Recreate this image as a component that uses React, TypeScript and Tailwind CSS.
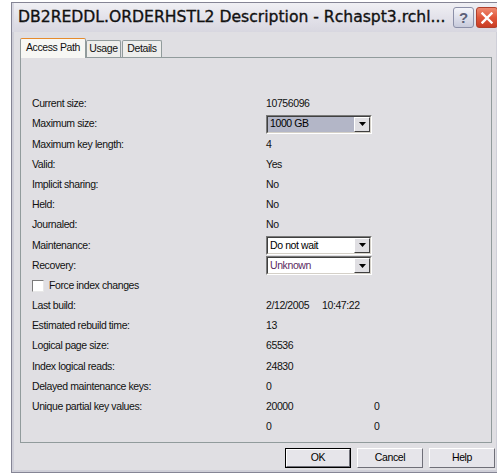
import type { ReactNode } from 'react'

const ui = '"Liberation Sans", Arial, sans-serif'

type Row = {
  label?: string
  value?: ReactNode
  second?: string
  check?: boolean
}

function Combo({ text, selected, purple }: { text: string; selected?: boolean; purple?: boolean }) {
  return (
    <div className="flex h-[19px] w-[106px] items-stretch border border-t-[#7a7a7a] border-l-[#7a7a7a] border-r-white border-b-white">
      <div className="flex flex-1 items-center border border-t-[#404040] border-l-[#404040] border-r-[#d4d0c8] border-b-[#d4d0c8] bg-white">
        <div
          className={`flex h-full flex-1 items-center pl-[2px] ${selected ? 'bg-[#b3b6c7] text-black' : ''} ${purple ? 'text-[#5b2a5e]' : 'text-black'}`}
        >
          {text}
        </div>
        <div className="flex h-[15px] w-[16px] items-center justify-center border border-t-white border-l-white border-r-[#404040] border-b-[#404040] bg-[#e0dfe3]">
          <svg width="7" height="4" viewBox="0 0 7 4">
            <path d="M0 0h7L3.5 4z" fill="#000" />
          </svg>
        </div>
      </div>
    </div>
  )
}

const rows: Row[] = [
  { label: 'Current size:', value: '10756096' },
  { label: 'Maximum size:', value: <Combo text="1000 GB" selected /> },
  { label: 'Maximum key length:', value: '4' },
  { label: 'Valid:', value: 'Yes' },
  { label: 'Implicit sharing:', value: 'No' },
  { label: 'Held:', value: 'No' },
  { label: 'Journaled:', value: 'No' },
  { label: 'Maintenance:', value: <Combo text="Do not wait" /> },
  { label: 'Recovery:', value: <Combo text="Unknown" purple /> },
  { label: 'Force index changes', check: true },
  {
    label: 'Last build:',
    value: (
      <span className="flex">
        <span className="w-[56px]">2/12/2005</span>
        <span>10:47:22</span>
      </span>
    ),
  },
  { label: 'Estimated rebuild time:', value: '13' },
  { label: 'Logical page size:', value: '65536' },
  { label: 'Index logical reads:', value: '24830' },
  { label: 'Delayed maintenance keys:', value: '0' },
  { label: 'Unique partial key values:', value: '20000', second: '0' },
  { value: '0', second: '0' },
]

function Button({ children, main }: { children: ReactNode; main?: boolean }) {
  return (
    <div className={`h-[20px] w-[66px] ${main ? 'border border-black' : ''}`}>
      <div className="flex h-full w-full items-center justify-center border border-t-white border-l-white border-r-[#6f6f78] border-b-[#6f6f78] bg-[#e6e5ea] text-black">
        {children}
      </div>
    </div>
  )
}

export default function App() {
  return (
    <div className="h-[476px] w-[497px] overflow-hidden bg-white pt-[2px] pl-[11px]">
      {/* dialog frame */}
      <div className="flex h-[471px] w-[488px] flex-col border border-[#858595] bg-[#e0dfe3]">
        {/* caption */}
        <div className="flex h-[29px] items-center border-l-2 border-[#d8d8e2] bg-gradient-to-b from-[#f0f0f4] via-[#e3e2ea] to-[#d8d7e0] pl-[4px] pr-0">
          <span
            className="flex-1 whitespace-nowrap pt-[1px] text-[15.6px] text-[#111] [-webkit-text-stroke:0.35px_#111]"
            style={{ fontFamily: '"DejaVu Sans", Verdana, sans-serif' }}
          >
            DB2REDDL.ORDERHSTL2 Description - Rchaspt3.rchl...
          </span>
          <div className="ml-[3px] flex h-[21px] w-[21px] items-center justify-center rounded-[3px] border border-[#8c90a8] bg-gradient-to-b from-[#f4f5fa] to-[#c8cbdc]">
            <span className="text-[15px] font-bold leading-none text-[#5c6078]" style={{ fontFamily: ui }}>
              ?
            </span>
          </div>
          <div className="ml-[2px] flex h-[21px] w-[22px] items-center justify-center rounded-[3px] border border-[#b0402c] bg-gradient-to-b from-[#ee8a70] via-[#e0563a] to-[#c83c24]">
            <svg width="12" height="12" viewBox="0 0 12 12">
              <path d="M1.5 1.5l9 9M10.5 1.5l-9 9" stroke="#fff" strokeWidth="2.4" strokeLinecap="square" />
            </svg>
          </div>
        </div>

        {/* body */}
        <div
          className="flex flex-1 flex-col border-x-2 border-b-2 border-[#cfcfd8] pl-[6px] pt-[5px] text-[10.5px] tracking-[-0.4px] text-[#111]"
          style={{ fontFamily: ui }}
        >
          {/* tabs */}
          <div className="flex h-[20px] items-end">
            <div className="relative z-10 -mb-px flex h-[20px] w-[66px] items-center justify-center rounded-t-[2px] border border-b-0 border-[#919b9c] border-t-[#e68b2c] bg-[#f7f7f4] pb-[2px]">
              Access Path
            </div>
            <div className="flex h-[17px] w-[35px] items-center justify-center rounded-t-[2px] border border-b-0 border-[#919b9c] bg-[#eeeeec]">
              Usage
            </div>
            <div className="ml-px flex h-[17px] w-[40px] items-center justify-center rounded-t-[2px] border border-b-0 border-[#919b9c] bg-[#eeeeec]">
              Details
            </div>
          </div>

          {/* page */}
          <div className="flex h-[386px] w-[472px] flex-col border border-[#919b9c] bg-[#e0dfe3] pt-[36px] pl-[11px]">
            {rows.map((r, i) => (
              <div key={i} className="flex h-[20.2px] items-center">
                {r.check ? (
                  <div className="flex items-center">
                    <div className="mr-[5px] h-[12px] w-[12px] border border-t-[#7a7a7a] border-l-[#7a7a7a] border-r-[#e8e8e8] border-b-[#e8e8e8] bg-white" />
                    <span>{r.label}</span>
                  </div>
                ) : (
                  <>
                    <span className="w-[234px]">{r.label ?? ''}</span>
                    <div className="w-[108px]">{r.value}</div>
                    {r.second && <span>{r.second}</span>}
                  </>
                )}
              </div>
            ))}
          </div>

          {/* dialog buttons */}
          <div className="mt-[5px] flex gap-[6px] pl-[265px]">
            <Button main>OK</Button>
            <Button>Cancel</Button>
            <Button>Help</Button>
          </div>
        </div>
      </div>
    </div>
  )
}
